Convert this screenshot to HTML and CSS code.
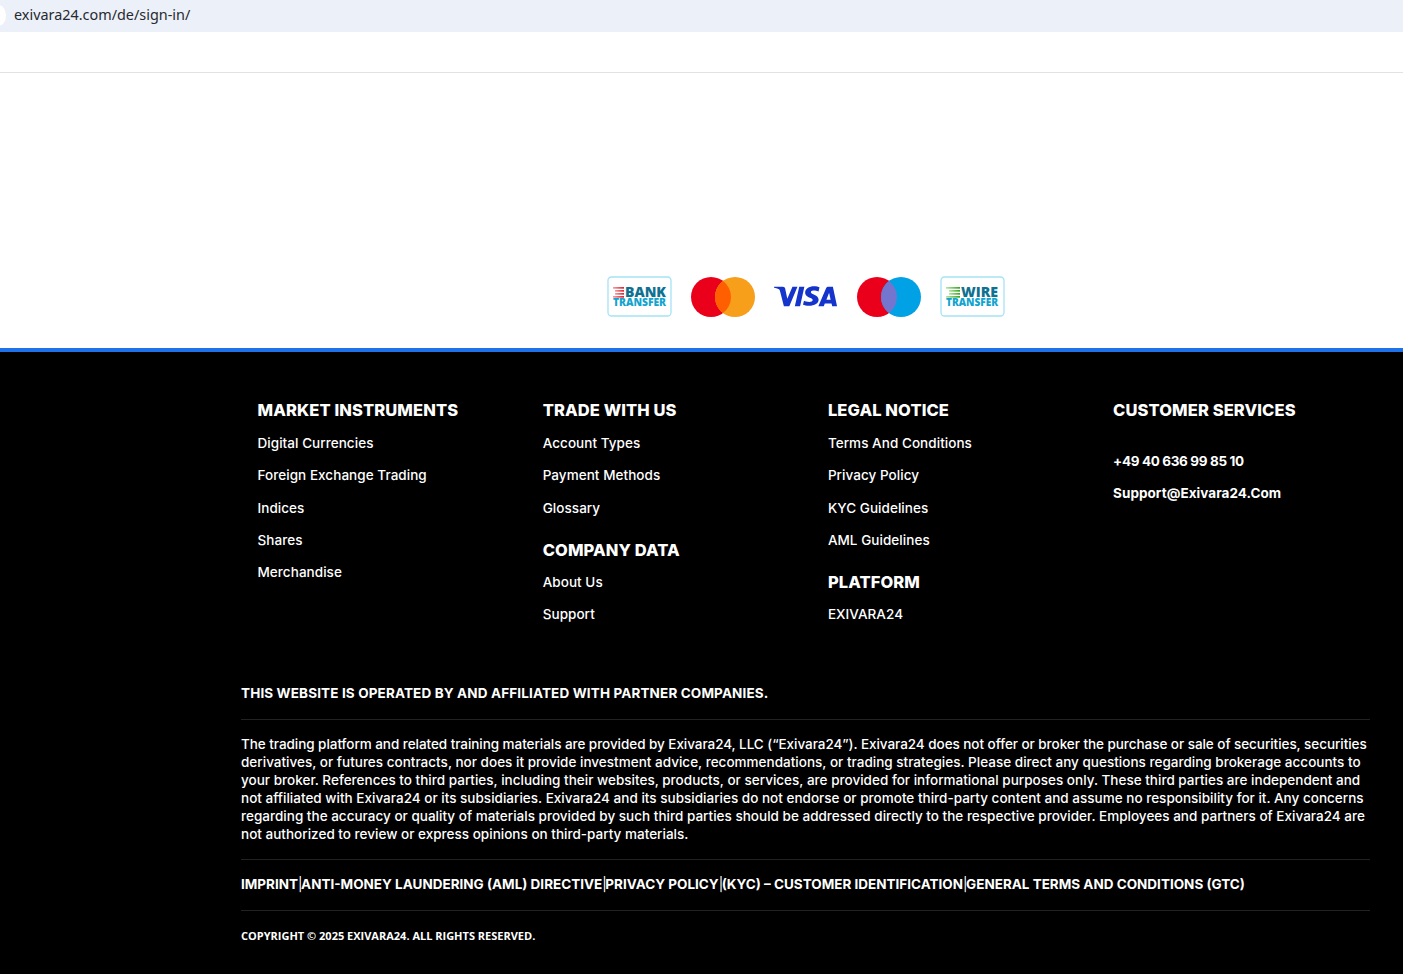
FILE: index.html
```html
<!DOCTYPE html>
<html lang="de">
<head>
<meta charset="utf-8">
<title>Exivara24</title>
<link rel="stylesheet" href="styles.css">
</head>
<body>
<div class="urlbar"><span class="urlcap"></span><span class="urltext">exivara24.com/de/sign-in/</span></div>
<header class="topnav"></header>
<main class="content">
  <div class="payments">
    <svg class="badge" viewBox="0 0 65 41" width="65" height="41">
      <defs>
        <linearGradient id="redfade"><stop offset="0" stop-color="#f2a0a4"/><stop offset="1" stop-color="#d8232f"/></linearGradient>
        <linearGradient id="greenfade"><stop offset="0" stop-color="#b5e6a5"/><stop offset="1" stop-color="#35a61f"/></linearGradient>
      </defs>
      <rect x="1" y="1" width="63" height="39" rx="3.500" fill="#fff" stroke="#a4e3f4" stroke-width="1.300"/>
      <g fill="url(#redfade)"><rect x="6" y="11" width="11" height="1.700"/><rect x="8" y="14" width="9" height="1.700"/><rect x="8" y="17" width="9" height="1.700"/><rect x="6" y="20" width="11" height="1.700"/></g>
      <text x="18" y="21" class="bt-top" textLength="41" lengthAdjust="spacingAndGlyphs">BANK</text>
      <text x="6" y="30" class="bt-sub" textLength="53" lengthAdjust="spacingAndGlyphs">TRANSFER</text>
    </svg>
    <svg class="mark" viewBox="0 0 64 40" width="64" height="40"><circle cx="20" cy="20" r="20" fill="#eb001b"/><circle cx="44" cy="20" r="20" fill="#f79e1b"/><path d="M32 4a20 20 0 0 1 0 32a20 20 0 0 1 0-32z" fill="#ff5f00"/></svg>
    <svg class="visa" viewBox="0 0 64 24" width="64" height="21" preserveAspectRatio="none"><path d="M24.200 .8 15.800 23h-5.600L6.100 5.500C5.800 4.400 5.500 4 4.600 3.500 3.200 2.800 1.800 2.300 0 1.900L.2.800h8.900c1.200 0 2.200.8 2.400 2.100l2.200 11.800L19 .8zM46 15.700c0-5.800-8-6.100-8-8.700 0-.8.800-1.600 2.400-1.800.8-.1 3-.2 5.500 1l1-4.700C45.600 1 43.800.4 41.600.4c-5.600 0-9.500 3-9.500 7.200 0 3.100 2.800 4.900 4.900 5.900 2.200 1 2.900 1.700 2.900 2.600 0 1.400-1.700 2.100-3.300 2.100-2.800 0-4.400-.8-5.700-1.400l-1 4.700c1.300.6 3.700 1.100 6.200 1.100C42 22.600 46 19.700 46 15.700zM60 23h5L60.700.8h-4.600c-1 0-1.900.6-2.300 1.500L45.700 23h5.600l1.100-3.100h6.900zm-6-7.400 2.800-7.800 1.600 7.800zM31.300.8 26.900 23h-5.400L26 .8z" fill="#1434cb" transform="scale(.97 1)"/></svg>
    <svg class="mark" viewBox="0 0 64 40" width="64" height="40"><circle cx="20" cy="20" r="20" fill="#eb001b"/><circle cx="44" cy="20" r="20" fill="#00a2e5"/><path d="M32 4a20 20 0 0 1 0 32a20 20 0 0 1 0-32z" fill="#7375cf"/></svg>
    <svg class="badge" viewBox="0 0 65 41" width="65" height="41">
      <rect x="1" y="1" width="63" height="39" rx="3.500" fill="#fff" stroke="#a4e3f4" stroke-width="1.300"/>
      <g fill="url(#greenfade)"><rect x="6" y="11" width="14" height="1.700"/><rect x="9" y="14" width="11" height="1.700"/><rect x="9" y="17" width="11" height="1.700"/><rect x="6" y="20" width="14" height="1.700"/></g>
      <text x="21" y="21" class="bt-top" textLength="37" lengthAdjust="spacingAndGlyphs">WIRE</text>
      <text x="6" y="30" class="bt-sub" textLength="52" lengthAdjust="spacingAndGlyphs">TRANSFER</text>
    </svg>
  </div>
</main>
<footer class="footer">
  <div class="cols">
    <div class="col">
      <h4>MARKET INSTRUMENTS</h4>
      <a>Digital Currencies</a><a>Foreign Exchange Trading</a><a>Indices</a><a>Shares</a><a>Merchandise</a>
    </div>
    <div class="col">
      <h4>TRADE WITH US</h4>
      <a>Account Types</a><a>Payment Methods</a><a>Glossary</a>
      <h4 class="sub">COMPANY DATA</h4>
      <a>About Us</a><a>Support</a>
    </div>
    <div class="col">
      <h4>LEGAL NOTICE</h4>
      <a>Terms And Conditions</a><a>Privacy Policy</a><a>KYC Guidelines</a><a>AML Guidelines</a>
      <h4 class="sub">PLATFORM</h4>
      <a>EXIVARA24</a>
    </div>
    <div class="col service">
      <h4>CUSTOMER SERVICES</h4>
      <a class="phone">+49 40 636 99 85 10</a><a>Support@Exivara24.Com</a>
    </div>
  </div>
  <div class="legal">
    <p class="operated">THIS WEBSITE IS OPERATED BY AND AFFILIATED WITH PARTNER COMPANIES.</p>
    <p class="disclaimer"><span class="tight">The trading platform and related training materials are provided by Exivara24, LLC (“Exivara24”). Exivara24 does not offer or broker the purchase or sale of securities, securities</span><br>derivatives, or futures contracts, nor does it provide investment advice, recommendations, or trading strategies. Please direct any questions regarding brokerage accounts to<br>your broker. References to third parties, including their websites, products, or services, are provided for informational purposes only. These third parties are independent and<br>not affiliated with Exivara24 or its subsidiaries. Exivara24 and its subsidiaries do not endorse or promote third-party content and assume no responsibility for it. Any concerns<br>regarding the accuracy or quality of materials provided by such third parties should be addressed directly to the respective provider. Employees and partners of Exivara24 are<br>not authorized to review or express opinions on third-party materials.</p>
    <p class="links">IMPRINT<i>|</i>ANTI-MONEY LAUNDERING (AML) DIRECTIVE<i>|</i>PRIVACY POLICY<i>|</i>(KYC) – CUSTOMER IDENTIFICATION<i>|</i>GENERAL TERMS AND CONDITIONS (GTC)</p>
    <p class="copy">COPYRIGHT © 2025 EXIVARA24. ALL RIGHTS RESERVED.</p>
  </div>
</footer>
</body>
</html>
```
FILE: styles.css
```css
* { box-sizing: border-box; }
html, body { margin: 0; padding: 0; background: #fff; }
body { font-family: Inter, "Liberation Sans", sans-serif; height: 974px; overflow: hidden; }
.urlbar { height: 32px; background: #ebf0f9; display: flex; align-items: center; padding: 0 0 3px 14px; position: relative; }
.urlcap { position: absolute; left: -10px; top: 5px; width: 16px; height: 21px; border-radius: 50%; background: #fff; }
.urltext { font: 14.400px "Noto Sans", sans-serif; color: #27292e; }
.topnav { height: 41px; border-bottom: 1px solid #e2e2e2; }
.content { height: 279px; display: flex; align-items: flex-start; justify-content: center; padding: 203px 0 0 209px; border-bottom: 4px solid #1f72e8; }
.payments { display: flex; align-items: center; gap: 19px; }
.badge text { font-family: "Open Sans", sans-serif; font-weight: 800; }
.bt-top { font-size: 13.500px; fill: #0f7191; }
.bt-sub { font-size: 10.500px; fill: #12a4cf; }
.footer { background: #000; color: #fff; height: 622px; padding: 48px 33px 0 241px; }
.cols { display: grid; grid-template-columns: repeat(4, 285.200px); padding-left: 16.500px; }
.col { display: flex; flex-direction: column; align-items: flex-start; }
.col h4 { margin: 0; font-size: 16.500px; line-height: 20px; font-weight: 800; letter-spacing: .1px; }
.col a { font-size: 13.500px; line-height: 18px; margin-top: 14.250px; font-weight: 500; letter-spacing: .05px; }
.col h4 + a { margin-top: 14px; }
.col h4.sub { margin-top: 23px; }
.col h4.sub + a { margin-top: 13px; }
.service a { font-weight: 700; }
.service h4 + a { margin-top: 32px; }
.service .phone { letter-spacing: -.35px; }
.legal { margin-top: 48px; }
.legal p { margin: 0; }
.operated { font-size: 13.500px; line-height: 18px; font-weight: 700; letter-spacing: .14px; padding: 13px 0 17px; border-bottom: 1px solid #222; }
.disclaimer { font-size: 13.500px; line-height: 18px; font-weight: 500; letter-spacing: .015px; padding: 15px 0 16px; border-bottom: 1px solid #222; white-space: nowrap; }
.tight { letter-spacing: -.05px; }
.links { font-size: 13.500px; line-height: 18px; font-weight: 700; padding: 15px 0 17px; border-bottom: 1px solid #222; white-space: nowrap; }
.links i { font-style: normal; font-weight: 400; letter-spacing: -1.500px; }
.copy { font: 700 11px/18px "Open Sans", sans-serif; padding-top: 16px; }
```
